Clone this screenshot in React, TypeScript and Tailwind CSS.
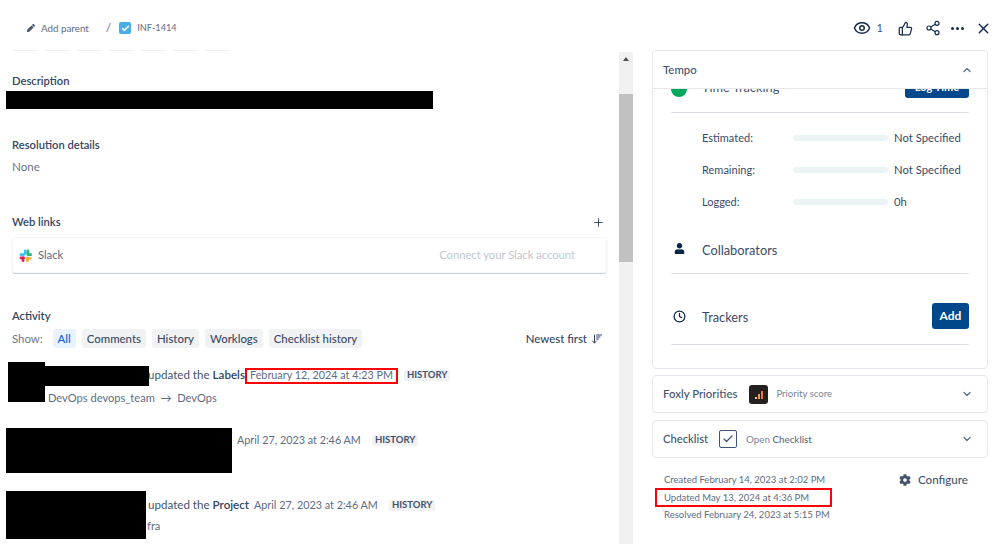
import React from "react";
import { Eye, ThumbsUp, Share2, X, ChevronUp, ChevronDown, Plus, Clock, Check, ArrowDownWideNarrow } from "lucide-react";
import { FaPen, FaUser, FaCog } from "react-icons/fa";

const Slack = () => (
  <svg width="13" height="13" viewBox="0 0 24 24">
    <rect x="9" y="1" width="5" height="10" rx="2.5" fill="#36c5f0" />
    <rect x="1" y="9" width="10" height="5" rx="2.5" fill="#36c5f0" transform="translate(0 -1)" />
    <rect x="14" y="1" width="5" height="10" rx="2.5" fill="#2eb67d" />
    <rect x="14" y="8" width="10" height="5" rx="2.5" fill="#2eb67d" />
    <rect x="1" y="14" width="10" height="5" rx="2.5" fill="#e01e5a" />
    <rect x="5" y="14" width="5" height="10" rx="2.5" fill="#e01e5a" />
    <rect x="13" y="14" width="5" height="10" rx="2.5" fill="#ecb22e" />
    <rect x="13" y="15" width="10" height="5" rx="2.5" fill="#ecb22e" />
  </svg>
);

const Tab = ({ children, active }: { children: React.ReactNode; active?: boolean }) => (
  <span className={`h-[19px] px-[5px] flex items-center rounded-[3px] text-[11.4px] font-medium ${active ? "bg-[#e9f2ff] text-[#0c66e4]" : "bg-[#f1f2f4] text-[#3b4a66]"}`}>
    {children}
  </span>
);

const Badge = () => (
  <span className="h-[11px] px-[3px] flex items-center rounded-[2px] bg-[#f1f2f4] text-[9.5px] font-bold text-[#44546f]">HISTORY</span>
);

const TimeRow = ({ label, value }: { label: string; value: string }) => (
  <div className="h-[32px] flex items-center pl-[31px] text-[11px] text-[#3b4a66]">
    <span className="w-[91px]">{label}</span>
    <span className="w-[95px] h-[6px] rounded-full bg-[#ebf3f5]" />
    <span className="ml-[6px] text-[11.3px]">{value}</span>
  </div>
);

const Collapsed = ({ children }: { children: React.ReactNode }) => (
  <div className="h-[38px] border border-[#e6e7eb] rounded-[4px] flex items-center pl-[10px] pr-[14px]">
    {children}
    <ChevronDown size={12} strokeWidth={2.5} className="ml-auto text-[#5e6c84]" />
  </div>
);

export default function App() {
  return (
    <div className="w-[999px] h-[544px] overflow-hidden bg-white flex flex-col font-['Lato','Open_Sans',sans-serif] text-[#44546f]">
      <header className="h-[50px] shrink-0 flex items-center pl-[27px] pr-[7px] pt-[6px]">
        <FaPen size={8} className="text-[#44546f]" />
        <span className="ml-[6px] text-[9.8px] text-[#5e6c84]">Add parent</span>
        <span className="ml-[17px] text-[12px] text-[#5e6c84]">/</span>
        <span className="ml-[8px] w-[12px] h-[12px] rounded-[2px] bg-[#4bade8] flex items-center justify-center">
          <Check size={9} strokeWidth={4} className="text-white" />
        </span>
        <span className="ml-[6px] text-[9.2px] text-[#5e6c84]">INF-1414</span>
        <div className="ml-auto flex items-center text-[#172b4d]">
          <Eye size={18} strokeWidth={2} />
          <span className="ml-[6px] text-[11px] text-[#44546f]">1</span>
          <ThumbsUp size={15} strokeWidth={2} className="ml-[15px]" />
          <Share2 size={16} strokeWidth={1.75} className="ml-[12px]" />
          <span className="ml-[10px] flex gap-[2px]">
            <i className="w-[3px] h-[3px] rounded-full bg-[#172b4d]" />
            <i className="w-[3px] h-[3px] rounded-full bg-[#172b4d]" />
            <i className="w-[3px] h-[3px] rounded-full bg-[#172b4d]" />
          </span>
          <X size={17} strokeWidth={2} className="ml-[11px]" />
        </div>
      </header>

      <div className="flex flex-1 min-h-0">
        <main className="w-[619px] shrink-0 overflow-hidden">
          <div className="flex gap-[8px] pl-[13px] h-[2px]">
            {[0, 1, 2, 3, 4, 5, 6].map((i) => (
              <span key={i} className="w-[24px] h-[1px] bg-[#f1f2f4]" />
            ))}
          </div>
          <section className="relative pl-[12px] pt-[21px]">
            <h2 className="text-[11.2px] leading-[16px] font-semibold text-[#344563]">Description</h2>
            <div className="h-[18px] mt-[2px]" />
            <div className="absolute left-[6px] top-[39px] w-[427px] h-[18px] bg-black" />
            <h2 className="mt-[28px] text-[11.2px] leading-[16px] font-semibold text-[#344563]">Resolution details</h2>
            <p className="mt-[6px] text-[11.6px] leading-[16px] text-[#6b778c]">None</p>
          </section>

          <section className="pl-[12px] pr-[12px] mt-[39px]">
            <div className="flex items-center h-[16px]">
              <h2 className="text-[11.2px] leading-[16px] font-semibold text-[#344563]">Web links</h2>
              <Plus size={13} strokeWidth={1.5} className="ml-auto mr-[2px] text-[#172b4d]" />
            </div>
            <div className="mt-[7px] h-[36px] rounded-[3px] border border-[#f4f5f7] shadow-[0_1px_1px_#c9ced8] flex items-center pl-[6px] pr-[31px]">
              <Slack />
              <span className="ml-[6px] text-[11.2px] text-[#5e6c84]">Slack</span>
              <span className="ml-auto text-[11.2px] text-[#c1c7d0]">Connect your Slack account</span>
            </div>
          </section>

          <section className="pl-[12px] pr-[12px] mt-[35px]">
            <h2 className="text-[11.2px] leading-[16px] font-semibold text-[#344563]">Activity</h2>
            <div className="mt-[5px] flex items-center gap-[6px]">
              <span className="mr-[4px] text-[11.4px] text-[#6b778c]">Show:</span>
              <Tab active>All</Tab>
              <Tab>Comments</Tab>
              <Tab>History</Tab>
              <Tab>Worklogs</Tab>
              <Tab>Checklist history</Tab>
              <span className="ml-auto text-[11.4px] font-medium text-[#344563]">Newest first</span>
              <ArrowDownWideNarrow size={12} strokeWidth={2} className="-ml-[2px] mr-[4px] text-[#344563]" />
            </div>
          </section>

          <section className="relative mt-[15px] pt-[4px] h-[200px] text-[10.8px] text-[#5e6c84]">
            <div className="absolute left-[8px] top-[-1px] w-[37px] h-[40px] bg-black" />
            <div className="absolute left-[44px] top-[3px] w-[105px] h-[20px] bg-black" />
            <div className="absolute left-[6px] top-[65px] w-[226px] h-[45px] bg-black" />
            <div className="absolute left-[6px] top-[128px] w-[140px] h-[48px] bg-black" />
            <div className="absolute left-[245px] top-[5px] w-[153px] h-[16px] border-2 border-[#ff0000]" />

            <div className="pl-[148px] h-[16px] flex items-center">
              <span className="w-[102px] text-[11.6px] text-[#44546f]">updated the <b className="font-semibold text-[#344563]">Labels</b></span>
              <span>February 12, 2024 at 4:23 PM</span>
              <span className="ml-[11px]"><Badge /></span>
            </div>
            <div className="pl-[48px] h-[16px] mt-[7px] flex items-center text-[11.1px] text-[#5e6c84]">DevOps devops_team&nbsp; →&nbsp; DevOps</div>

            <div className="pl-[237px] h-[16px] mt-[26px] flex items-center">
              <span>April 27, 2023 at 2:46 AM</span>
              <span className="ml-[11px]"><Badge /></span>
            </div>

            <div className="pl-[148px] h-[16px] mt-[49px] flex items-center">
              <span className="w-[106px] text-[11.6px] text-[#44546f]">updated the <b className="font-semibold text-[#344563]">Project</b></span>
              <span>April 27, 2023 at 2:46 AM</span>
              <span className="ml-[11px]"><Badge /></span>
            </div>
            <div className="pl-[147px] h-[16px] mt-[5px] flex items-center text-[11.1px] text-[#5e6c84]">fra</div>
          </section>
        </main>

        <div className="w-[14px] shrink-0 bg-[#f1f1f1] flex flex-col items-center pt-[5px] mt-[2px]">
          <span className="w-0 h-0 border-x-[3.5px] border-x-transparent border-b-[4px] border-b-[#505050]" />
          <span className="mt-[33px] w-full h-[168px] bg-[#c1c1c1]" />
        </div>

        <aside className="ml-[19px] w-[336px] shrink-0 flex flex-col">
          <div className="h-[319px] border border-[#e6e7eb] rounded-[4px] overflow-hidden">
            <div className="h-[38px] border-b border-[#e6e7eb] flex items-center pl-[10px] pr-[14px]">
              <span className="text-[11.4px] font-medium text-[#44546f]">Tempo</span>
              <ChevronUp size={12} strokeWidth={2.5} className="ml-auto text-[#5e6c84]" />
            </div>
            <div className="px-[18px]">
              <div className="h-[24px] border-b border-[#dcdde4] relative overflow-hidden">
                <span className="absolute left-0 -top-[8px] w-[16px] h-[16px] rounded-full bg-[#00a85a]" />
                <span className="absolute left-[31px] -top-[11px] text-[12.8px] text-[#44546f]">Time Tracking</span>
                <span className="absolute right-0 -top-[10px] w-[64px] h-[19px] rounded-[3px] bg-[#00478b] text-white text-[11px] font-bold text-center">Log Time</span>
              </div>
              <div className="pt-[9px]">
                <TimeRow label="Estimated:" value="Not Specified" />
                <TimeRow label="Remaining:" value="Not Specified" />
                <TimeRow label="Logged:" value="0h" />
              </div>
              <div className="mt-[17px] h-[39px] border-b border-[#dcdde4] flex items-start pt-[6px]">
                <FaUser size={11} className="ml-[3px] mt-[2px] text-[#0b2545]" />
                <span className="ml-[17px] text-[12.8px] leading-[18px] text-[#3b4a66]">Collaborators</span>
              </div>
              <div className="mt-[29px] h-[42px] border-b border-[#dcdde4] flex items-start">
                <Clock size={13} strokeWidth={2.25} className="ml-[2px] mt-[7px] text-[#0b2545]" />
                <span className="ml-[16px] mt-[5px] text-[12.8px] leading-[18px] text-[#3b4a66]">Trackers</span>
                <span className="ml-auto w-[37px] h-[26px] rounded-[3px] bg-[#00478b] text-white text-[12px] font-bold flex items-center justify-center">Add</span>
              </div>
            </div>
          </div>

          <div className="mt-[6px]">
            <Collapsed>
              <span className="text-[11.4px] font-medium text-[#44546f]">Foxly Priorities</span>
              <span className="ml-[12px] w-[19px] h-[19px] rounded-[3px] bg-[#23201f] flex items-end justify-center gap-[1px] pb-[5px]">
                <i className="w-[2px] h-[2px] bg-[#f7c59f]" />
                <i className="w-[2px] h-[5px] bg-[#f79a4b]" />
                <i className="w-[2px] h-[8px] bg-[#f2762e]" />
              </span>
              <span className="ml-[8px] text-[9.6px] text-[#7a869a]">Priority score</span>
            </Collapsed>
          </div>
          <div className="mt-[7px]">
            <Collapsed>
              <span className="text-[11.2px] font-medium text-[#44546f]">Checklist</span>
              <span className="ml-[11px] w-[18px] h-[18px] rounded-[2px] border-[1.5px] border-[#3f5578] flex items-center justify-center">
                <Check size={12} strokeWidth={2.5} className="text-[#3f5578]" />
              </span>
              <span className="ml-[9px] text-[9.8px] text-[#7a869a]">Open <b className="font-medium text-[#5e6c84]">Checklist</b></span>
            </Collapsed>
          </div>

          <div className="relative mt-[13px] flex pl-[12px] pr-[20px] text-[9.5px] leading-[17.5px] text-[#5e6c84]">
            <div className="absolute left-[3px] top-[17px] w-[177px] h-[19px] border-2 border-[#ff0000]" />
            <div>
              <p>Created February 14, 2023 at 2:02 PM</p>
              <p>Updated May 13, 2024 at 4:36 PM</p>
              <p>Resolved February 24, 2023 at 5:15 PM</p>
            </div>
            <div className="ml-auto flex items-start gap-[7px] text-[#44546f]">
              <FaCog size={12} className="mt-[3px]" />
              <span className="text-[11.6px] font-medium">Configure</span>
            </div>
          </div>
        </aside>
      </div>
    </div>
  );
}
